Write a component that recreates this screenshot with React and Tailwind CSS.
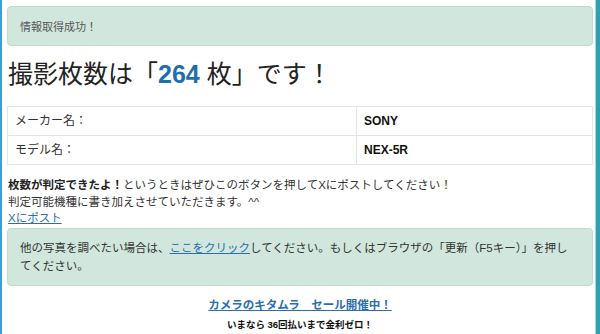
export default function App() {
  const font = { fontFamily: '"Liberation Sans", "Noto Sans CJK JP", sans-serif' };
  return (
    <div className="w-[600px] h-[334px] overflow-hidden bg-white flex text-[#333]" style={font}>
      <div className="w-[2px] bg-[#3b9fd0] shrink-0" />
      <div className="flex-1 flex flex-col pl-[5px] pr-[2px] pt-[6px]">
        <div className="h-[40px] rounded-[4px] border border-[#bcdccf] bg-[#d1e7dd] flex items-center pl-[12px] pt-[2px] text-[11px] text-[#555]">
          情報取得成功！
        </div>
        <h1 className="mt-[12px] ml-[1px] text-[25px] leading-[32px] text-[#222]">
          撮影枚数は「<span className="font-bold text-[#1f6ead]">264</span> 枚」です！
        </h1>
        <table className="mt-[16px] w-full border-collapse text-[12px]">
          <tbody>
            <tr className="h-[29px]">
              <td className="border border-[#e3e6e8] pl-[7px] w-[349px]">メーカー名：</td>
              <td className="border border-[#e3e6e8] pl-[7px] font-bold text-[#111]">SONY</td>
            </tr>
            <tr className="h-[29px]">
              <td className="border border-[#e3e6e8] pl-[7px]">モデル名：</td>
              <td className="border border-[#e3e6e8] pl-[7px] font-bold text-[#111]">NEX-5R</td>
            </tr>
          </tbody>
        </table>
        <div className="mt-[12px] ml-[1px] text-[11.5px] leading-[16.5px]">
          <div><span className="font-bold text-[#222]">枚数が判定できたよ！</span>というときはぜひこのボタンを押してXにポストしてください！</div>
          <div>判定可能機種に書き加えさせていただきます。^^</div>
          <div><a className="underline text-[#2a6eb0]">Xにポスト</a></div>
        </div>
        <div className="mt-[1px] h-[58px] rounded-[4px] border border-[#bcdccf] bg-[#d1e7dd] pl-[12px] pr-[18px] pt-[10px] text-[11.5px] leading-[18px] text-[#333]">
          他の写真を調べたい場合は、<a className="underline text-[#2a6eb0]">ここをクリック</a>してください。もしくはブラウザの「更新（F5キー）」を押し<br />てください。
        </div>
        <div className="mt-[11px] flex flex-col items-center">
          <a className="underline font-bold text-[11.5px] leading-[16px] text-[#2a6eb0]">カメラのキタムラ　セール開催中！</a>
          <div className="mt-[6px] font-bold text-[9.5px] leading-[12px] text-[#111]">いまなら 36回払いまで金利ゼロ！</div>
        </div>
      </div>
      <div className="w-[5px] shrink-0 flex">
        <div className="w-[1px] bg-[#9ddbe3]" />
        <div className="flex-1 bg-[#2f9fb3]" />
      </div>
    </div>
  );
}
